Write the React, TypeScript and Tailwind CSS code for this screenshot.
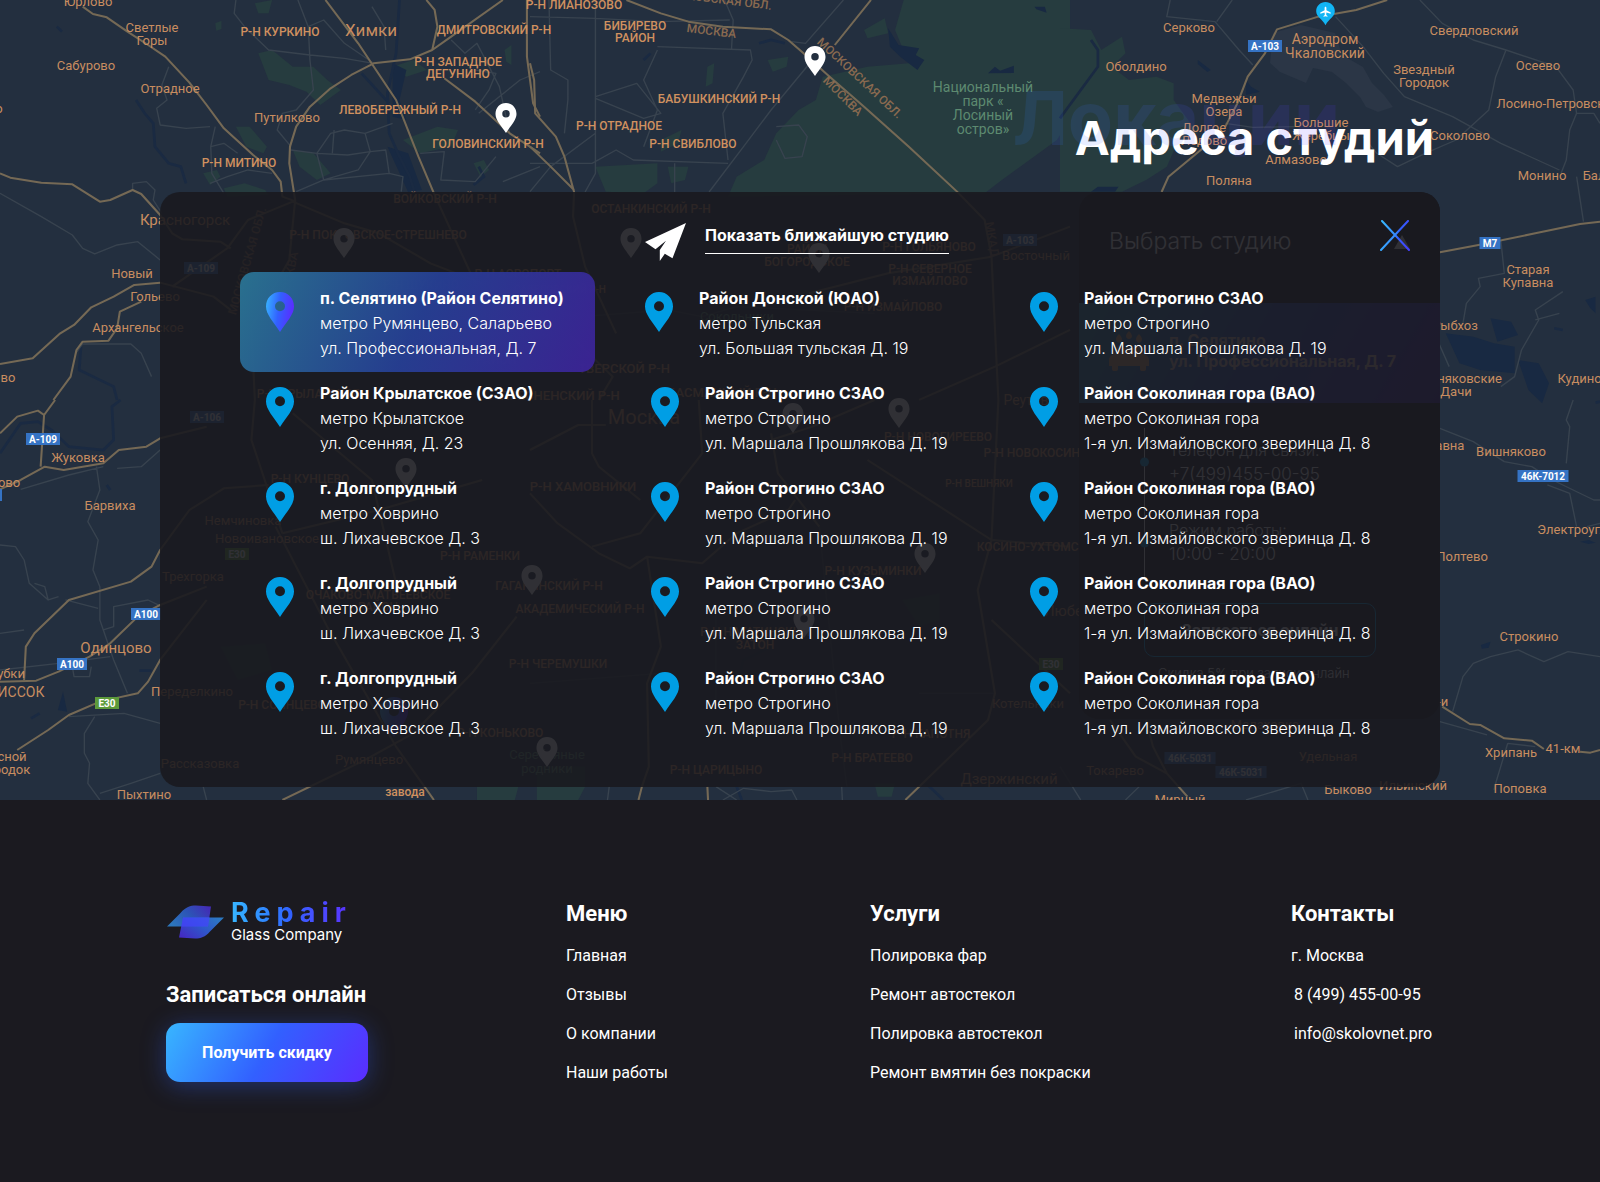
import React from "react";

type Studio = {
  title: string;
  metro: string;
  address: string;
};

const strogino: Studio = {
  title: "Район Строгино СЗАО",
  metro: "метро Строгино",
  address: "ул. Маршала Прошлякова Д. 19",
};

const dolgoprudny: Studio = {
  title: "г. Долгопрудный",
  metro: "метро Ховрино",
  address: "ш. Лихачевское Д. 3",
};

const sokolinaya: Studio = {
  title: "Район Соколиная гора (ВАО)",
  metro: "метро Соколиная гора",
  address: "1-я ул. Измайловского зверинца Д. 8",
};

const columns: { item: string; studios: Studio[] }[] = [
  {
    item: "px-[26px]",
    studios: [
      {
        title: "п. Селятино (Район Селятино)",
        metro: "метро Румянцево, Саларьево",
        address: "ул. Профессиональная, Д. 7",
      },
      {
        title: "Район Крылатское (СЗАО)",
        metro: "метро Крылатское",
        address: "ул. Осенняя, Д. 23",
      },
      dolgoprudny,
      dolgoprudny,
      dolgoprudny,
    ],
  },
  {
    item: "pl-[6px] group-first:pl-0",
    studios: [
      {
        title: "Район Донской (ЮАО)",
        metro: "метро Тульская",
        address: "ул. Большая тульская Д. 19",
      },
      strogino,
      strogino,
      strogino,
      strogino,
    ],
  },
  {
    item: "pl-0",
    studios: [strogino, sokolinaya, sokolinaya, sokolinaya, sokolinaya],
  },
];

const menuLinks = ["Главная", "Отзывы", "О компании", "Наши работы"];
const serviceLinks = [
  "Полировка фар",
  "Ремонт автостекол",
  "Полировка автостекол",
  "Ремонт вмятин без покраски",
];

const PIN =
  "M14 0C6 0 0 6.2 0 14.6 0 22.6 7.4 29.8 14 40c6.6-10.2 14-17.4 14-25.4C28 6.2 22 0 14 0zm0 9.2a5 5 0 1 1 0 10 5 5 0 0 1 0-10z";

/* ---------- map data ---------- */

type Tile = {
  x: number;
  y: number;
  parks?: string;
  water?: string;
  rivers?: string;
  minor: string;
  major: string;
};

const tiles: Tile[] = [
  {
    x: 0,
    y: 0,
    parks:
      "M750 160l40-10 60 50 60 0 40 40 40 30-60 45-40-40-50-20-60-15zM685 380l40 0 50 60-10 20-50-20zM590 520l40-10 10 20-30 25zM1140 200l60-20 40 30-60 20zM1170 420l100-40 60 10-20 50-90 20zM850 450l60 10 50 60-40 20-50-40zM650 565l60-15 60 20 10 15-120 5zM740 10l50-10-10 40-30 0zM625 70l18-8 0 25-15 5zM1465 150l20-15 0 60-15-10zM1375 490l30-10 15 30-25 20z",
    water: "M1140 190l40 20-20 90 20 60-40-10zM1125 440l60 20 40 110-40 6z",
    rivers:
      "M1160 0 1150 160 1125 280 1130 400 1160 470 1190 530 1210 600M395 300 420 340 445 370 450 440 490 490 525 500 540 550M235 1040 230 1110 330 1160 340 1200M1050 220 1130 310M1390 500 1405 530 1375 555M415 75 425 90M165 80 180 95",
    minor:
      "M0 580 120 650 210 705 240 745 275 762 340 735 400 725 465 780M385 570 385 550 425 545 450 570 445 600 470 640M610 380 540 385 465 375 455 325 485 300 470 255 490 200M685 0 680 40 710 80 740 110 780 150 900 165 1000 175 1085 190M865 0 895 80 900 180 910 270 860 330 820 340 805 390 845 440M895 80 940 60 1000 130 1085 190M845 450 920 460 1010 465 1075 455M920 460 960 400 1000 390 1060 400 1075 455 1040 510 940 540 920 460M970 390 965 460M1060 400 1140 370M1075 455 1120 450 1130 520M860 575 940 540 1130 520 1170 530 1165 575M610 550 660 530 720 510 790 520M625 380 612 440 650 430 690 460M612 440 615 520 650 580M1380 210 1440 220 1420 270 1380 330M1390 340 1510 240 1568 215M1220 460 1290 455 1280 540 1380 545 1440 470M220 1060 240 1032 380 1032 410 1060 440 1130M1080 20 1115 80 1120 150M1310 120 1350 160 1385 130 1450 260 1480 400M1460 545 1568 500",
    major:
      "M240 20 270 42 310 52 370 95 430 135 480 170 550 248 600 315 650 385 735 465 790 510 815 545 820 590 860 605M0 520 30 533 120 548 210 553 290 605 320 600 385 570 410 582 465 645 500 700 530 718 640 725 670 745M0 1092 95 1075 175 1000 215 975 265 922 330 890 390 855 465 848 620 890 670 930M410 905 348 935 340 985 315 1022 240 1025 222 1050 205 1130 155 1200M1460 0 1310 110 1255 150 1190 178 1085 190 1020 225 960 265 900 320 860 380 842 440 840 490 857 600 840 780 730 980 740 1200M945 0 1040 130 1150 300 1215 470 1260 580 1340 760 1380 850M1238 0 1262 30 1270 80 1255 150M1290 235 1380 305 1480 400 1568 460M1530 0 1530 170 1548 310 1568 350M500 860 660 745 720 660 850 605 1000 670 1100 700 1250 790 1400 850",
  },
  {
    x: 530,
    y: 0,
    parks:
      "M1085 0 1568 0 1568 360 1530 420 1370 540 1320 580 575 590 600 530 680 480 715 400 780 330 830 300 850 230 980 200 1100 190 1060 90zM190 500l180-10 0 60-40 30-110-5zM400 500l60 0-10 40-40 10zM690 180l60-10-5 30-40 15zM380 420l60-30-10 40-50 25zM515 200l20-10-5 60-20 10zM970 90l60-35 10 45-60 15z",
    water:
      "M1040 85l30 50 60 10-10 20 25 15-20 30-50-40-30-30zM1330 220l20-20 15 12 40-15 0 22zM1465 20l30 0 5 18-30-10z",
    rivers: "M665 130 700 120 740 130M330 180 350 160",
    minor:
      "M0 50 190 55 370 65 580 60M55 0 60 210 110 240 110 300 100 400M190 0 190 520 160 576M370 150 330 240 370 330 330 440M370 140 640 150 645 180 620 230 560 340 575 480M820 180 700 330 620 440 520 576M0 490 180 490 250 450 300 480 575 490M420 490 420 576M190 290 310 250 380 340 330 355 190 295M910 0 800 130 760 125M565 0 590 60 585 150M715 380 780 375 805 410 790 470 740 475 715 420M0 575 60 500 190 400M150 950 400 930 500 950 600 920 1000 940",
    major:
      "M280 0 380 40 460 65 560 80 700 88 750 120 800 165 870 230 970 320 1100 440 1240 575 1320 660 1340 770 1360 1200M990 0 885 135M0 190 12 240 15 340 75 410 100 470 128 576 125 650 160 800 250 1000M0 440 60 500 128 570M810 880 1040 820 1340 770 1568 680M1130 1200 1350 1100 1568 990M200 1200 240 1130 120 1010",
  },
  {
    x: 1060,
    y: 0,
    parks:
      "M0 85 90 90 120 150 180 110 190 160 150 200 200 240 280 230 330 250 330 300 400 400 340 430 310 500 250 540 180 575 0 575z",
    water:
      "M1120 1000l80 10 60 20 60 10 0 80-100-10-60-20zM1250 955l60 10 20 40-60 20zM1330 1080l60 10 30 60-20 60-40-40zM400 180l38 30-10 6-28-24zM540 240l15 20 25 15-40 10zM1525 900l30-10 0 50-15-15zM90 575l20-15 60 0-10 15z",
    rivers: "M0 355 110 200 110 150 90 120M1435 985 1460 990",
    minor:
      "M320 0 310 50 450 65 520 150 560 195M500 0 455 65M1045 0 1110 70 1200 120 1295 150 1440 200 1490 270 1500 340 1480 390 1470 480 1455 520M1500 530 1520 665M1295 150 1265 230 1245 330 1150 420 1060 460 980 500 920 460 880 410M480 370 560 382 680 380M1280 720 1290 820 1215 835 1220 860 1180 910 1170 970M1460 875 1380 930 1390 960 1340 1050 1320 1130 1280 1160M1380 960 1450 940M1500 340 1550 340 1568 370M1100 1030 1130 1100M800 50 880 140 940 220 1000 290 1140 350 1280 430 1450 510",
    major:
      "M950 0 860 30 750 50 630 88 595 160 545 230 515 310 480 380M420 440 315 530 295 576M1103 757 1215 735 1380 700 1510 672 1568 665",
  },
  {
    x: 0,
    y: 400,
    parks: "M640 740l130-10 20 80-100 30zM1385 1160l120 0-10 40-110 0z",
    water: "M168 930l15-55 12 60z",
    rivers:
      "M0 160 60 70 110 65 150 90 200 140 300 150 330 120 325 20 350 0M310 255 320 270M90 955 115 940M405 812 440 812",
    minor:
      "M0 435 45 440 70 480 85 550 140 600 170 590M280 200 290 270 255 365 285 420 270 510 290 560 290 660 330 780 370 880M190 600 285 625M300 690 330 680 330 620 430 600 470 620M0 700 70 690M0 810 170 790 320 770M275 950 245 1000 245 1060 260 1090 255 1150 290 1200M200 950 360 940 465 970M465 1120 380 1150 290 1180M210 800 215 830 260 830 265 800M340 205 410 200 465 150M590 1160 600 1200M60 268 200 225 300 200M100 550 130 560 140 600",
    major:
      "M0 100 50 50 110 32 128 45 160 0M128 45 118 200M0 268 60 240 130 200 185 210 300 190 345 150 425 140 465 115 600 80M465 450 440 500 380 545 200 600 100 700 75 740 70 840M0 845 105 842 170 815 260 770 320 730 400 650 465 615 600 560M50 1050 140 990 200 945 290 905 400 880 430 845 465 780 600 600M465 450 550 330 650 265 780 255M820 400 1100 330 1400 240M820 1200 1060 1080 1200 1000 1370 820 1500 650M850 40 1080 240 1150 550M800 380 950 680 1150 1040 1260 1200M740 0 730 120 820 400",
  },
  {
    x: 530,
    y: 400,
    parks:
      "M20 1100l140 0 0 60-20 40-120 0zM1080 600l110-20 0 80-60 20zM1000 1150l60 0-10 40-40 0z",
    rivers: "M1150 1150 1200 1200M600 1160 615 1200M600 860 620 780 700 740",
    minor:
      "M230 1160 225 1200M540 1160 600 1200M560 1200 620 1165 700 1175 760 1170 775 1200M905 1160 907 1200M0 850 380 820M840 380 900 1000 920 1160M1130 880 1350 880M540 900 540 620 640 620",
    major:
      "M325 1160 315 1200M515 1160 517 1200M0 280 80 370 200 460 290 505 340 470 500 490 600 400 750 330 770 300M340 470 380 740 340 850 345 1100 325 1160M980 180 1340 420 1568 440M1360 0 1340 420 1300 570 1350 880 1330 960 1090 1200M180 0 180 160 200 200 320 300M0 150 140 75 220 75M490 0 500 160 320 400 180 440M1340 660 1568 880M700 120 820 80 1000 0M700 100 720 220 840 380",
  },
  {
    x: 1060,
    y: 400,
    water: "M1222 735l28-10-5 18-20 3zM1510 425l25-5 20 8-20 4z",
    rivers: "M1555 8 1568 5",
    minor:
      "M1103 85 1200 125 1290 185 1370 200 1430 240 1550 300 1568 300M1490 0 1470 60 1480 80 1470 190M1415 255 1480 280 1500 380M1530 380 1568 370M1140 935 1170 830 1200 790 1250 770 1330 750 1405 785 1475 755 1568 770M1300 1030 1265 1150 1260 1170M1380 1040 1300 1030M1103 965 1240 1005M540 1200 700 1150 720 1200M0 1100 60 1200M190 1200 230 1160",
    major:
      "M1110 920 1190 972 1220 975 1290 1015 1370 1022 1405 1047M1510 1055 1540 1058 1568 1050M145 960 220 1070 310 1120 370 1190M250 960 270 1040 310 1120",
  },
];

// [text, center x, center y, size]
type Label = [string, number, number, number?];

const towns: Label[] = [
  ["Юрлово", 88, 1],
  ["Светлые", 152, 27],
  ["Горы", 152, 40],
  ["Сабурово", 86, 65],
  ["Отрадное", 170, 88],
  ["Путилково", 287, 117],
  ["Химки", 371, 30, 17],
  ["Красногорск", 185, 220, 15],
  ["Новый", 132, 273],
  ["Гольево", 155, 296],
  ["Архангельское", 138, 327],
  ["о", -1, 108],
  ["во", 8, 377],
  ["Серково", 1189, 27],
  ["Оболдино", 1136, 66],
  ["Аэродром", 1325, 39, 14],
  ["Чкаловский", 1325, 53, 14],
  ["Свердловский", 1474, 30],
  ["Звездный", 1424, 69],
  ["Городок", 1424, 82],
  ["Осеево", 1538, 65],
  ["Медвежьи", 1224, 98],
  ["Озера", 1224, 111],
  ["Долгое", 1204, 127],
  ["Ледово", 1204, 140],
  ["Большие", 1321, 122],
  ["Жеребцы", 1321, 135],
  ["Алмазово", 1296, 159],
  ["Соколово", 1460, 135],
  ["Лосино-Петровский", 1558, 103],
  ["Монино", 1542, 175],
  ["Балашово", 1614, 175],
  ["Поляна", 1229, 180],
  ["Старая", 1528, 269],
  ["Купавна", 1528, 282],
  ["Рыбхоз", 1455, 325],
  ["Черняковские", 1458, 378],
  ["Дачи", 1456, 391],
  ["Кудиново", 1587, 378],
  ["Восточный", 1036, 255],
  ["Реутов", 1026, 400, 14],
  ["Москва", 644, 417, 20],
  ["Жуковка", 78, 457],
  ["ово", 9, 482],
  ["Барвиха", 110, 505],
  ["Немчиновка", 243, 520],
  ["Новоивановское", 267, 538],
  ["Трехгорка", 193, 576],
  ["Одинцово", 116, 648, 15],
  ["убки", 11, 673],
  ["ИССОК", 21, 692, 14],
  ["Переделкино", 192, 691],
  ["сной", 12, 756],
  ["родок", 12, 769],
  ["Рассказовка", 200, 763],
  ["Румянцево", 369, 759],
  ["Пыхтино", 144, 794],
  ["Люберцы", 1078, 611, 15],
  ["Котельники", 1028, 703],
  ["Дзержинский", 1009, 779, 15],
  ["Купавна", 1439, 445],
  ["Вишняково", 1511, 451],
  ["Электроугли", 1576, 529],
  ["Полтево", 1462, 556],
  ["Строкино", 1529, 636],
  ["Жилино-и", 1418, 701],
  ["Хрипань", 1511, 752],
  ["41-км", 1563, 748],
  ["Поповка", 1520, 788],
  ["Ильинский", 1413, 785],
  ["Быково", 1348, 789],
  ["Удельная", 1328, 756],
  ["Малаховка", 1265, 724],
  ["Токарево", 1115, 770],
  ["Мирный", 1180, 799],
];

const districts: Label[] = [
  ["Р-Н КУРКИНО", 280, 32],
  ["ДМИТРОВСКИЙ Р-Н", 494, 30],
  ["Р-Н ЗАПАДНОЕ", 458, 62],
  ["ДЕГУНИНО", 458, 74],
  ["ЛЕВОБЕРЕЖНЫЙ Р-Н", 400, 110],
  ["ГОЛОВИНСКИЙ Р-Н", 488, 144],
  ["Р-Н МИТИНО", 239, 163],
  ["ВОЙКОВСКИЙ Р-Н", 445, 199],
  ["Р-Н ПОКРОВСКОЕ-СТРЕШНЕВО", 378, 235],
  ["Р-Н ЩУКИНО", 421, 285],
  ["Р-Н АЭРОПОРТ", 518, 274],
  ["САВЕЛОВСКИЙ Р-Н", 560, 289, 10],
  ["РАЙОН", 496, 360],
  ["Р-Н КРЫЛАТСКОЕ", 308, 394],
  ["Р-Н ЛИАНОЗОВО", 574, 5],
  ["БИБИРЕВО", 635, 26],
  ["РАЙОН", 635, 38],
  ["БАБУШКИНСКИЙ Р-Н", 719, 99],
  ["Р-Н ОТРАДНОЕ", 619, 126],
  ["Р-Н СВИБЛОВО", 693, 144],
  ["ОСТАНКИНСКИЙ Р-Н", 651, 209],
  ["РАЙОН", 807, 249],
  ["БОГОРОДСКОЕ", 807, 262],
  ["Р-Н ГОЛЬЯНОВО", 929, 247],
  ["Р-Н СЕВЕРНОЕ", 930, 269],
  ["ИЗМАЙЛОВО", 930, 281],
  ["Р-Н ИЗМАЙЛОВО", 893, 307],
  ["ТВЕРСКОЙ Р-Н", 624, 368, 13],
  ["ПРЕСНЕНСКИЙ Р-Н", 560, 395, 13],
  ["БАСМАННЫЙ Р-Н", 722, 392, 13],
  ["Р-Н КУНЦЕВО", 310, 479],
  ["Р-Н РАМЕНКИ", 480, 556],
  ["ОЧАКОВО-МАТВЕЕВСКОЕ", 378, 595],
  ["РАЙОН", 378, 607],
  ["ГАГАРИНСКИЙ Р-Н", 549, 586],
  ["АКАДЕМИЧЕСКИЙ Р-Н", 580, 609],
  ["Р-Н ЧЕРЕМУШКИ", 558, 664],
  ["Р-Н КОНЬКОВО", 500, 733],
  ["Р-Н СОЛНЦЕВО", 282, 705],
  ["завода", 405, 792],
  ["Р-Н ХАМОВНИКИ", 583, 486, 13],
  ["Р-Н НОВОГИРЕЕВО", 938, 437],
  ["Р-Н НОВОКОСИНО", 1036, 453],
  ["Р-Н ВЕШНЯКИ", 979, 483, 10],
  ["КОСИНО-УХТОМСКИЙ", 1040, 547],
  ["Р-Н КУЗЬМИНКИ", 873, 571],
  ["Р-Н НАГАТИНСКИЙ", 755, 632],
  ["ЗАТОН", 755, 645],
  ["Р-Н КАПОТНЯ", 931, 734],
  ["Р-Н БРАТЕЕВО", 872, 758],
  ["Р-Н ЦАРИЦЫНО", 716, 770],
];

const greenLabels: Label[] = [
  ["Национальный", 983, 87, 14],
  ["парк «", 983, 101, 14],
  ["Лосиный", 983, 115, 14],
  ["остров»", 983, 129, 14],
  ["Сокольники", 737, 316],
  ["Серебряные", 547, 754],
  ["родники", 547, 768],
];

// [text, x, y, angle]
const borderLabels: [string, number, number, number][] = [
  ["МОСКВА", 711, 35, 7],
  ["МОСКОВСКАЯ ОБЛ.", 716, 3, 7],
  ["МОСКОВСКАЯ ОБЛ.", 857, 81, 43],
  ["МОСКВА", 840, 99, 45],
  ["МОСКОВСКАЯ ОБЛ.", 251, 262, -74],
  ["МОСКВА", 293, 277, -78],
  ["МКАД", 988, 240, 80],
];

const shields: { text: string; x: number; y: number; w: number; fill: string }[] = [
  { text: "A-103", x: 1265, y: 46, w: 34, fill: "#3573c4" },
  { text: "A-109", x: 201, y: 268, w: 34, fill: "#3573c4" },
  { text: "A-103", x: 1020, y: 240, w: 34, fill: "#3573c4" },
  { text: "M7", x: 1490, y: 243, w: 21, fill: "#3573c4" },
  { text: "A-109", x: 43, y: 439, w: 34, fill: "#3573c4" },
  { text: "A-106", x: 207, y: 417, w: 34, fill: "#3573c4" },
  { text: "E30", x: 237, y: 554, w: 24, fill: "#5c9a3b" },
  { text: "A100", x: 146, y: 614, w: 30, fill: "#3573c4" },
  { text: "A100", x: 72, y: 664, w: 30, fill: "#3573c4" },
  { text: "E30", x: 107, y: 703, w: 24, fill: "#5c9a3b" },
  { text: "A100", x: -13, y: 495, w: 30, fill: "#3573c4" },
  { text: "E30", x: 1051, y: 664, w: 24, fill: "#5c9a3b" },
  { text: "46К-7012", x: 1543, y: 476, w: 51, fill: "#3573c4" },
  { text: "46К-5031", x: 1190, y: 758, w: 51, fill: "#3573c4" },
  { text: "46К-5031", x: 1241, y: 772, w: 51, fill: "#3573c4" },
];

const mapPins: [number, number][] = [
  [506, 103],
  [815, 46],
  [344, 228],
  [631, 228],
  [819, 243],
  [406, 458],
  [532, 565],
  [793, 403],
  [899, 398],
  [925, 543],
  [804, 608],
  [547, 737],
];

const MapLabels: React.FC<{ items: Label[]; className: string }> = ({
  items,
  className,
}) => (
  <g className={className} textAnchor="middle">
    {items.map(([text, x, y, size = 13], i) => (
      <text key={i} x={x} y={y} dy={size * 0.36} fontSize={size}>
        {text}
      </text>
    ))}
  </g>
);

const StudioMap: React.FC = () => (
  <svg
    className="absolute inset-0 h-full w-full bg-[#232f3f] font-[Roboto,sans-serif]"
    viewBox="0 0 1600 800"
    preserveAspectRatio="xMidYMin slice"
    aria-hidden="true"
  >
    <defs>
      <linearGradient id="map-pin" x1="0" y1="0.1" x2="1" y2="0.3">
        <stop offset="0" stopColor="#38b6ff" />
        <stop offset="0.5" stopColor="#3260ff" />
        <stop offset="1" stopColor="#5a2dff" />
      </linearGradient>
    </defs>

    {/* land and water first, so that roads run across tile borders on top */}
    {tiles.map((t) => (
      <g
        key={`land-${t.x}-${t.y}`}
        transform={`translate(${t.x} ${t.y}) scale(0.3444 0.3333)`}
      >
        {t.parks && <path d={t.parks} fill="#263c3f" />}
        {t.water && <path d={t.water} fill="#182942" />}
        {t.rivers && (
          <path d={t.rivers} fill="none" stroke="#1a2a42" strokeWidth="8" />
        )}
      </g>
    ))}
    {/* airfield */}
    <path
      d="M1273 33L1270 63 1280 72 1306 83 1313 68 1332 72 1346 83 1360 97 1366 107 1378 112 1393 107 1384 95 1372 83 1363 67 1342 55 1335 33 1301 25z"
      fill="#2b3646"
    />
    {tiles.map((t) => (
      <g
        key={`roads-${t.x}-${t.y}`}
        transform={`translate(${t.x} ${t.y}) scale(0.3444 0.3333)`}
        fill="none"
        strokeLinejoin="round"
      >
        <path d={t.minor} stroke="#38434f" strokeWidth="4" />
        <path d={t.major} stroke="#756955" strokeWidth="6" />
      </g>
    ))}

    <g className="fill-[#8a6a50] text-[12px] font-medium" textAnchor="middle">
      {borderLabels.map(([text, x, y, angle], i) => (
        <text key={i} transform={`translate(${x} ${y}) rotate(${angle})`}>
          {text}
        </text>
      ))}
    </g>
    <MapLabels items={towns} className="fill-[#c88d60]" />
    <MapLabels
      items={districts.map(([text, x, y, size = 12]) => [text, x, y, size])}
      className="fill-[#d0915f] font-medium"
    />
    <MapLabels items={greenLabels} className="fill-[#5d8a70]" />

    {shields.map((s, i) => (
      <g key={i}>
        <rect x={s.x - s.w / 2} y={s.y - 6} width={s.w} height="12" fill={s.fill} />
        <text
          x={s.x}
          y={s.y + 4}
          textAnchor="middle"
          className="fill-white text-[10px] font-bold"
        >
          {s.text}
        </text>
      </g>
    ))}

    {/* airfield marker */}
    <path
      d="M1325.5 2c-5.2 0-9.3 4-9.3 9.2 0 5.8 6.3 7.6 9.3 14 3-6.4 9.3-8.2 9.3-14 0-5.2-4.1-9.2-9.3-9.2z"
      fill="#12b5f5"
    />
    <path
      d="M1325.5 6.5l.9 1v2.700l4.300 2.400v1.200l-4.300-1.200-.2 2.400 1.300.9v.8l-2-.5-2 .5v-.8l1.300-.9-.2-2.400-4.300 1.200v-1.200l4.300-2.400V7.500z"
      fill="#fff"
    />

    {mapPins.map(([x, y]) => (
      <path
        key={`${x}-${y}`}
        transform={`translate(${x - 10.5} ${y}) scale(0.75)`}
        d={PIN}
        fill="#fff"
      />
    ))}
    <path transform="translate(380 697)" d={PIN} fill="url(#map-pin)" />
  </svg>
);

/* ---------- studio card lying under the dialog ---------- */

const StudioCard: React.FC = () => (
  <aside
    aria-hidden="true"
    className="w-[361px] self-start justify-self-end overflow-hidden rounded-[20px] bg-[#1b191f] pb-[36px] text-white [grid-area:1/1]"
  >
    <div className="flex h-[111px] items-center justify-between pr-[30px] pb-[12px] pl-[30px] text-[23px] font-light">
      Выбрать студию
      <svg width="16" height="14" viewBox="0 0 16 14">
        <path d="M8 0l8 14H0z" fill="#fff" />
      </svg>
    </div>
    <div className="flex h-[100px] items-center gap-[20px] bg-[linear-gradient(120deg,#2b8aab,#2a4ab0_50%,#4326a5)] pb-[4px] pl-[30px] text-[16px] leading-[21px] font-bold text-[#d0b9b0]">
      <svg width="40" height="40" viewBox="0 0 40 40" fill="#d8a070">
        <path d="M9 14l-4 9c-3 1-5 3-5 6v6h3v3c0 3 6 3 6 0v-3h22v3c0 3 6 3 6 0v-3h3v-6c0-3-2-5-5-6l-4-9-5 3H14zM13 8c0 5-6 5-6 0 0-2 3-5 3-5s3 3 3 5zM23 5c0 4-6 4-6 0 0-2 3-5 3-5s3 3 3 5zM33 8c0 5-6 5-6 0 0-2 3-5 3-5s3 3 3 5z" />
      </svg>
      <p>
        п. Селятино
        <br />
        ул. Профессиональная, Д. 7
      </p>
    </div>
    <div className="mt-[25px] ml-[65px] flex h-[150px] gap-[20px]">
      <svg width="9" height="150" viewBox="0 0 9 150" className="-ml-[4px]">
        <path d="M4.500 0v150" stroke="#fff" />
        <circle cx="4.500" cy="34" r="4.500" fill="#009ee5" />
        <circle cx="4.500" cy="115" r="4.500" fill="#009ee5" />
      </svg>
      <div className="pt-[10px] text-[16px] leading-[24px] font-light">
        <p>Телефон для связи:</p>
        <p className="text-[17px]">+7(499)455-00-95</p>
        <p className="mt-[32px]">Режим работы:</p>
        <p className="text-[17px]">10:00 - 20:00</p>
      </div>
    </div>
    <div className="mt-[25px] ml-[65px] grid h-[54px] w-[232px] place-items-center rounded-[10px] border border-[#009ee5] text-[16px] font-bold">
      Записаться онлайн
    </div>
    <p className="mt-[6px] ml-[79px] text-[13px] leading-[20px] font-light">
      Скидка 5% при записи онлайн
    </p>
  </aside>
);

/* ---------- dialog ---------- */

const StudioPin: React.FC<{ active: boolean }> = ({ active }) => (
  <svg
    className="mt-[6px] shrink-0"
    width="28"
    height="40"
    viewBox="0 0 28 40"
    aria-hidden="true"
  >
    <path d={PIN} fill={active ? "url(#map-pin)" : "#009ee5"} />
  </svg>
);

const StudioDialog: React.FC = () => (
  <div
    role="dialog"
    aria-label="Адреса студий"
    className="z-10 rounded-[20px] bg-[#1a191f]/90 pr-[29px] pb-[35px] pl-[80px] text-white [grid-area:1/1]"
  >
    <div className="grid h-[80px] grid-cols-[355px_335px_1fr] gap-x-[50px]">
      <a
        href="#nearest"
        className="col-start-2 flex items-start gap-[19px] self-start pt-[31px] text-[16px] leading-[24px] font-bold whitespace-nowrap"
      >
        <svg width="41" height="38" viewBox="0 0 41 38" aria-hidden="true">
          <path
            d="M41 0L0 19l10.500 7.200L21 17.800 14.800 27v11l5-7.200 7.700 4.400z"
            fill="#fff"
          />
        </svg>
        <span className="h-[31px] border-b border-white">
          Показать ближайшую студию
        </span>
      </a>
      <button
        type="button"
        aria-label="Закрыть"
        className="col-start-3 mt-[28px] h-[31px] w-[32px] justify-self-end"
      >
        <svg width="32" height="31" viewBox="0 0 32 31" fill="none">
          <defs>
            <linearGradient
              id="close"
              gradientUnits="userSpaceOnUse"
              x1="1"
              y1="12"
              x2="31"
              y2="20"
            >
              <stop offset="0" stopColor="#38b6ff" />
              <stop offset="0.5" stopColor="#358bff" />
              <stop offset="0.6" stopColor="#3260ff" />
              <stop offset="1" stopColor="#4440ff" />
            </linearGradient>
          </defs>
          <path
            d="M3 1l27 29M29 1L2 30"
            stroke="url(#close)"
            strokeWidth="2"
            strokeLinecap="round"
          />
        </svg>
      </button>
    </div>

    <div className="grid grid-cols-[355px_335px_1fr] gap-x-[50px]">
      {columns.map((column, col) => (
        <ul key={col}>
          {column.studios.map((studio, row) => {
            const active = col === 0 && row === 0;
            return (
              <li key={row} className="group">
                <button
                  type="button"
                  aria-pressed={active}
                  className={`flex w-full items-start gap-[26px] rounded-[14px] pt-[9px] pb-[11px] text-left text-[16px] leading-[25px] whitespace-nowrap group-first:pt-[14px] ${column.item} ${
                    active
                      ? "bg-[linear-gradient(115deg,#2a7594f2,#263f94f2_50%,#3c2397f2)]"
                      : ""
                  }`}
                >
                  <StudioPin active={active} />
                  <span className="font-light">
                    <b className="block font-bold">{studio.title}</b>
                    <span className="block">{studio.metro}</span>
                    <span className="block">{studio.address}</span>
                  </span>
                </button>
              </li>
            );
          })}
        </ul>
      ))}
    </div>
  </div>
);

/* ---------- footer ---------- */

const Logo: React.FC = () => (
  <a href="#top" className="flex items-center gap-[7px]">
    <svg width="58" height="34" viewBox="0 0 58 34" aria-hidden="true">
      <defs>
        <linearGradient id="wing-a" x1="0" y1="0.6" x2="1" y2="0.2">
          <stop offset="0" stopColor="#2f86d8" />
          <stop offset="0.5" stopColor="#2f5fd0" />
          <stop offset="1" stopColor="#4a2ed0" />
        </linearGradient>
        <linearGradient id="wing-b" x1="1" y1="0.2" x2="0" y2="0.8">
          <stop offset="0" stopColor="#2f8ae0" />
          <stop offset="0.5" stopColor="#3260e8" />
          <stop offset="1" stopColor="#4a2ee0" />
        </linearGradient>
      </defs>
      <path
        d="M1 21.500L14.500 8C20 2 24 .6 30 .6l15 1L42 21.500z"
        fill="url(#wing-a)"
        opacity="0.85"
      />
      <path
        d="M17 12.500h41L44 26.500c-5 5.500-9 7-15 7l-16-1z"
        fill="url(#wing-b)"
        opacity="0.85"
      />
      <path d="M17 12.500h26.500L42 21.500H15.500z" fill="#4340f5" opacity="0.7" />
    </svg>
    <span className="font-[Inter,sans-serif] text-white">
      <span className="block bg-linear-to-r from-[#38b6ff] via-[#3260ff] to-[#5a2dff] bg-clip-text text-[27px] leading-[26px] font-bold tracking-[6px] text-transparent">
        Repair
      </span>
      <span className="block text-[15px] leading-[18px]">Glass Company</span>
    </span>
  </a>
);

const FooterLinks: React.FC<{ title: string; links: string[] }> = ({
  title,
  links,
}) => (
  <nav aria-label={title}>
    <h3 className="text-[22px] leading-[28px] font-bold">{title}</h3>
    <ul className="mt-[18px] space-y-[19px] text-[16px] leading-[20px]">
      {links.map((link) => (
        <li key={link}>
          <a href="#">{link}</a>
        </li>
      ))}
    </ul>
  </nav>
);

const Footer: React.FC = () => (
  <footer className="bg-[#1b1a20] px-[166px] pt-[100px] pb-[100px] font-[Roboto,sans-serif] text-white">
    <div className="mx-auto grid max-w-[1268px] grid-cols-[400px_304px_1fr_143px]">
      <div>
        <Logo />
        <h3 className="mt-[37px] text-[22px] leading-[28px] font-bold">
          Записаться онлайн
        </h3>
        <button
          type="button"
          className="mt-[14px] h-[59px] w-[202px] rounded-[14px] bg-[linear-gradient(120deg,#38b6ff,#3260ff_50%,#5a2dff)] text-[16px] font-bold shadow-[0_4px_24px_#3260ff59]"
        >
          Получить скидку
        </button>
      </div>
      <FooterLinks title="Меню" links={menuLinks} />
      <FooterLinks title="Услуги" links={serviceLinks} />
      <div>
        <h3 className="text-[22px] leading-[28px] font-bold">Контакты</h3>
        <ul className="mt-[18px] space-y-[19px] text-[16px] leading-[20px]">
          <li>г. Москва</li>
          <li className="pl-[3px]">
            <a href="tel:84994550095">8 (499) 455-00-95</a>
          </li>
          <li className="pl-[3px]">
            <a href="mailto:info@skolovnet.pro">info@skolovnet.pro</a>
          </li>
        </ul>
      </div>
    </div>
  </footer>
);

export default function App() {
  return (
    <div id="top" className="min-h-screen bg-[#1b1a20] font-[Inter,sans-serif]">
      <section className="relative overflow-hidden px-[160px] pb-[13px]">
        <StudioMap />
        <div className="relative mx-auto max-w-[1280px]">
          <div className="flex h-[192px] items-start justify-end pt-[108px] pr-[6px]">
            <div className="relative">
              <h2 className="text-[47px] leading-[60px] font-bold text-white">
                Адреса студий
              </h2>
              <span
                aria-hidden="true"
                className="absolute right-[94px] bottom-[5px] bg-linear-to-r from-[#3280ff] to-[#5a2dff] bg-clip-text text-[74px] leading-[90px] font-bold text-transparent opacity-12"
              >
                Локации
              </span>
            </div>
          </div>
          <div className="grid">
            <StudioCard />
            <StudioDialog />
          </div>
        </div>
      </section>
      <Footer />
    </div>
  );
}
